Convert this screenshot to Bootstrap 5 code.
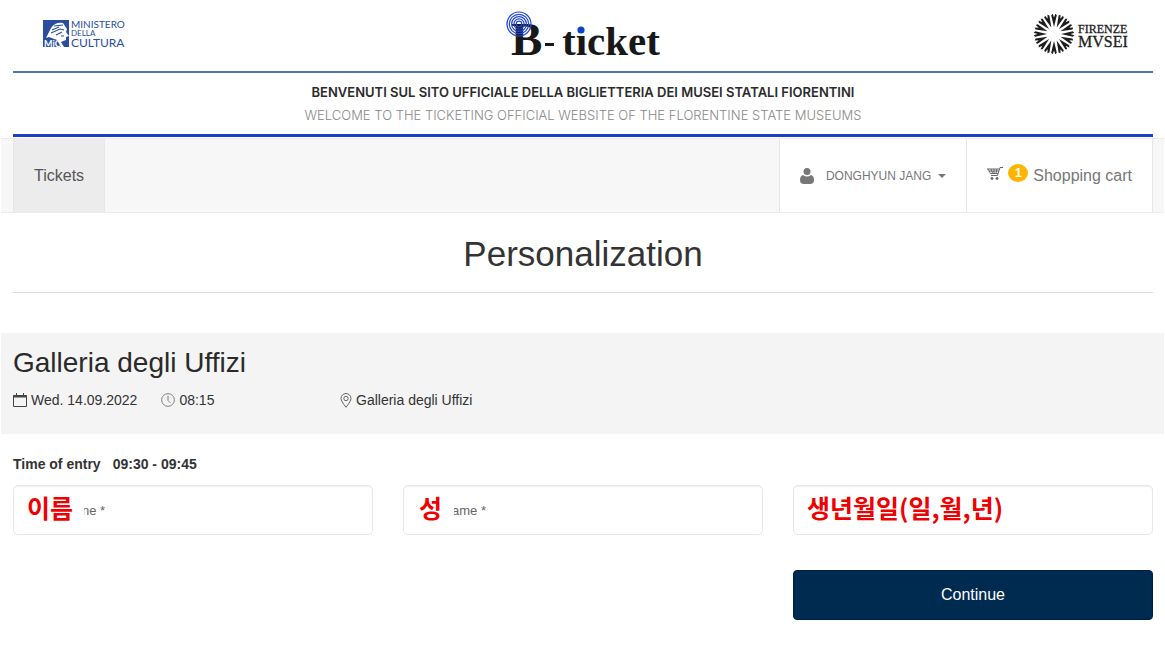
<!DOCTYPE html>
<html lang="en">
<head>
<meta charset="utf-8">
<meta name="viewport" content="width=device-width, initial-scale=1">
<title>B-ticket - Personalization</title>
<link href="https://cdn.jsdelivr.net/npm/bootstrap@5.3.0/dist/css/bootstrap.min.css" rel="stylesheet">
<style>
  body { font-family: "Liberation Sans", Arial, sans-serif; font-size: 14px; line-height: 20px; color: #333; background: #fff; }
  .page-wrap { padding-left: 13px; padding-right: 12px; }
  .page-edge { margin: 0 1px; }
  .brand-bar { height: 73px; border-bottom: 2px solid #4f74b3; padding: 0 24px 0 30px; }
  .brand-bar svg { display: block; }
  .serif { font-family: "Liberation Serif", serif; }
  .welcome { border-bottom: 3px solid #1b3fc4; padding: 8px 0 7px; font-family: Inter, sans-serif; font-size: 13px; line-height: 23px; }
  .welcome .it { font-weight: 600; color: #2b2b2b; }
  .welcome .en { font-weight: 300; color: #888; }
  .main-nav { background: #f7f7f7; border: 1px solid #ececec; border-width: 1px 0; margin-top: 1px; }
  .nav-row { height: 73px; padding-left: 12px; padding-right: 11px; }
  .nav-row a, .nav-row button { color: #777; text-decoration: none; }
  .nav-row .tab-tickets { background: #ececec; color: #555; font-size: 16px; padding: 0 20px; border: 1px solid #e7e7e7; border-width: 0 1px; }
  .user-menu { background: #fff; border: 0; border-left: 1px solid #e7e7e7; font-size: 12px; padding: 0 20px; }
  .user-menu::after { margin-left: 7px; border-width: 4px; border-bottom: 0; }
  .cart-link { background: #fff; border: 1px solid #e7e7e7; border-width: 0 1px; font-size: 16px; padding: 0 20px; }
  .cart-count { background: #fdb500; color: #fff; font-size: 12px; font-weight: 700; line-height: 18px; width: 20px; border-radius: 50%; margin: 0 5px 6px; }
  h1 { font-size: 35px; line-height: 40px; margin: 0; padding: 21px 0 18px; border-bottom: 1px solid #ddd; font-weight: 400; }
  .event { background: #f4f4f4; margin-top: 40px; height: 101px; padding: 13px 11px 0 12px; }
  .event h2 { font-size: 28px; line-height: 34px; margin: 0 0 10px; font-weight: 400; color: #2a2a2a; }
  .facts { gap: 24px; }
  .facts > span { display: flex; align-items: center; gap: 4px; }
  .place { padding-left: 42px; }
  .entry { font-weight: 700; padding: 20px 0 11px; gap: 12px; }
  .fields { --bs-gutter-x: 30px; }
  .field input { height: 50px; border: 1px solid #e7e7e7; border-radius: 5px; padding: 0 12px; font-size: 13px; box-shadow: inset 0 1px 1px rgba(0,0,0,.06); }
  .field input::placeholder { color: #666; opacity: 1; }
  .field .first { padding-left: 68px; }
  .field .last { padding-left: 48px; }
  .field label { position: absolute; top: 5px; left: 14px; background: #fff; color: #f00000; font: 700 25px/34px "Noto Sans CJK KR", sans-serif; }
  .field .first + label { padding-right: 11px; }
  .field .last + label { left: 16px; padding-right: 12px; }
  .go { background: #002b50; border: 1px solid #00223f; color: #fff; height: 50px; border-radius: 4px; font-size: 16px; margin-top: 35px; }
  .go:hover { background: #003a6b; color: #fff; }
</style>
</head>
<body>
<header class="page-wrap">
  <div class="brand-bar d-flex justify-content-between">
    <svg width="82" height="60" viewBox="0 0 82 60" role="img" aria-label="Ministero della Cultura" fill="#2b4da0">
      <path d="M0 20h26v27H0z"/>
      <path d="M8 28q4-6 12-5l4 6-1 3 3 4-3 1v3l-5 2 3 5h-3l-4-7-8-3-3 1z" fill="#fff"/>
      <path d="M9 30l7-3M8 33l9-4 4 1M13 35l6-3M11 26l9-1M18 36l3 0" fill="none" stroke="#2b4da0" stroke-width="1.100"/>
      <text x="1" y="47" font-family="Lato" font-size="9" font-weight="700" fill="#fff">MiC</text>
      <g font-family="Lato, sans-serif">
        <text x="28" y="28" font-size="10">MINISTERO</text>
        <text x="28" y="36" font-size="8">DELLA</text>
        <text x="28" y="47" font-size="12">CULTURA</text>
      </g>
    </svg>
    <svg width="170" height="66" viewBox="-12 0 170 66" role="img" aria-label="B-ticket" class="serif" fill="#181818" font-weight="700">
      <text x="5" y="55" font-size="47">B</text>
      <path d="M39 43h9v3H39z"/>
      <text x="56" y="55" font-size="41">ticket</text>
      <path d="M70 24h11v11H70z" fill="#fff"/>
      <circle cx="75" cy="30" r="3.600" fill="#0b43d0"/>
      <g fill="none" stroke="#2448d8" stroke-width="1.200">
        <circle cx="13" cy="24" r="12"/><circle cx="13" cy="24" r="9.700"/><circle cx="13" cy="24" r="7.400"/><circle cx="13" cy="24" r="5.100"/><circle cx="13" cy="24" r="2.800"/>
      </g>
    </svg>
    <svg width="96" height="66" viewBox="0 0 96 66" role="img" aria-label="Firenze Musei" fill="#1d1d1d">
      <defs><path id="ray" d="M0-7 2.800-18.800 1.300-20.300 0-16.500-1.300-20.300-2.800-18.800z"/></defs>
      <g transform="translate(21 34)">
        <use href="#ray"/><use href="#ray" transform="rotate(22.500)"/><use href="#ray" transform="rotate(45)"/><use href="#ray" transform="rotate(67.500)"/>
        <use href="#ray" transform="rotate(90)"/><use href="#ray" transform="rotate(112.500)"/><use href="#ray" transform="rotate(135)"/><use href="#ray" transform="rotate(157.500)"/>
        <use href="#ray" transform="rotate(180)"/><use href="#ray" transform="rotate(202.500)"/><use href="#ray" transform="rotate(225)"/><use href="#ray" transform="rotate(247.500)"/>
        <use href="#ray" transform="rotate(270)"/><use href="#ray" transform="rotate(292.500)"/><use href="#ray" transform="rotate(315)"/><use href="#ray" transform="rotate(337.500)"/>
      </g>
      <g class="serif" stroke="#1d1d1d" stroke-width=".3"><text x="45" y="33" font-size="12">FIRENZE</text><text x="45" y="47" font-size="16">MVSEI</text></g>
    </svg>
  </div>
  <div class="welcome text-center">
    <div class="it">BENVENUTI SUL SITO UFFICIALE DELLA BIGLIETTERIA DEI MUSEI STATALI FIORENTINI</div>
    <div class="en">WELCOME TO THE TICKETING OFFICIAL WEBSITE OF THE FLORENTINE STATE MUSEUMS</div>
  </div>
</header>

<nav class="main-nav page-edge">
  <div class="nav-row d-flex">
    <a href="#" class="tab-tickets d-flex align-items-center">Tickets</a>
    <button type="button" class="user-menu dropdown-toggle d-flex align-items-center ms-auto">
      <svg width="14" height="16" viewBox="0 0 14 16" fill="#777" class="me-2" aria-hidden="true"><circle cx="7" cy="3.500" r="3.500"/><path d="M3 7q4 3 8 0 3 1 3 5 0 4-4 4H4q-4 0-4-4 0-4 3-5z"/></svg>
      <span class="ms-1">DONGHYUN JANG</span>
    </button>
    <a href="#" class="cart-link d-flex align-items-center">
      <svg width="16" height="13" viewBox="0 0 16 13" fill="none" stroke="#666" class="mb-1" aria-hidden="true"><path d="M16 .500h-3l-2.500 8H4M0 2h12M1 2l2.500 4.500H11M2 4h10M4 2l1.500 4M7 2v4M10 2 9 6" /><circle cx="5" cy="11.500" r="1" fill="#666"/><circle cx="10" cy="11.500" r="1" fill="#666"/></svg>
      <span class="cart-count text-center">1</span>
      <span>Shopping cart</span>
    </a>
  </div>
</nav>

<main>
  <div class="page-wrap"><h1 class="text-center">Personalization</h1></div>
  <section class="event page-edge">
    <h2>Galleria degli Uffizi</h2>
    <div class="row g-0">
      <div class="facts col-auto col-md d-flex flex-wrap">
        <span><svg width="14" height="14" viewBox="0 0 14 14" fill="none" stroke="#444" aria-hidden="true"><path d="M.500 2.500h13v11H.500z"/><path d="M0 3.500h14" stroke-width="2"/><path d="M3.500 0v3M10.500 0v3"/></svg>Wed. 14.09.2022</span>
        <span><svg width="14" height="14" viewBox="0 0 15 15" fill="none" stroke="#777" aria-hidden="true"><circle cx="7.500" cy="7.500" r="6.800"/><path d="M7.500 3v5l2.500 2.500"/></svg>08:15</span>
      </div>
      <div class="facts col-auto col-md d-flex">
        <span class="place"><svg width="12" height="15" viewBox="0 0 12 15" fill="none" stroke="#666" aria-hidden="true"><path d="M6 14.300Q1 8 1 5.500a5 5 0 0 1 10 0Q11 8 6 14.300z"/><circle cx="6" cy="5.500" r="2.200"/></svg>Galleria degli Uffizi</span>
      </div>
      <div class="col-md-6"></div>
    </div>
  </section>
  <form class="page-wrap">
    <div class="entry d-flex"><span>Time of entry</span><span>09:30 - 09:45</span></div>
    <div class="fields row gy-0">
      <div class="col-md-4"><div class="field position-relative">
        <input type="text" id="firstName" class="first w-100" placeholder="ne *">
        <label for="firstName">이름</label>
      </div></div>
      <div class="col-md-4"><div class="field position-relative">
        <input type="text" id="lastName" class="last w-100" placeholder="ame *">
        <label for="lastName">성</label>
      </div></div>
      <div class="col-md-4"><div class="field position-relative">
        <input type="text" id="birthDate" class="w-100">
        <label for="birthDate">생년월일(일,월,년)</label>
      </div>
      <button type="submit" class="go btn w-100">Continue</button></div>
    </div>
  </form>
</main>
<script src="https://cdn.jsdelivr.net/npm/bootstrap@5.3.0/dist/js/bootstrap.bundle.min.js"></script>
</body>
</html>
